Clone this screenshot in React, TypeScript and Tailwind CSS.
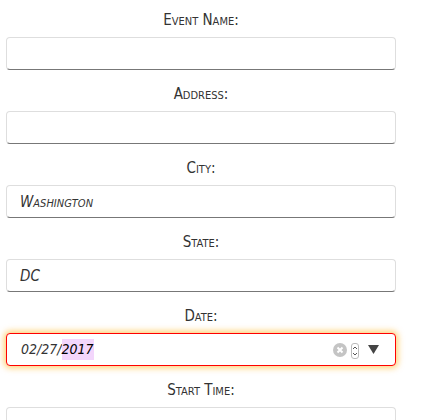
import React from "react";

const labelCls =
  "h-[28px] flex items-end justify-center text-[15px] leading-none text-[#333] [font-variant:small-caps]";
const inputCls =
  "h-[33px] w-full rounded-[4px] border border-[#dedede] border-b-[#777] bg-white flex items-center pl-[13px] pt-[2px] text-[#333] italic text-[15px] [font-variant:small-caps]";

function Field({ label, value, first }: { label: string; value?: string; first?: boolean }) {
  return (
    <div className={first ? "flex flex-col" : "flex flex-col mt-[4px]"}>
      <div className={labelCls}>{label}</div>
      <div className="h-[9px]" />
      <div className={inputCls}>{value}</div>
    </div>
  );
}

export default function App() {
  return (
    <div
      className="w-[435px] h-[420px] bg-white overflow-hidden"
      style={{ fontFamily: '"DejaVu Sans Condensed", "DejaVu Sans", sans-serif' }}
    >
      <div className="w-[390px] ml-[6px]">
        <Field label="Event Name:" first />
        <Field label="Address:" />
        <Field label="City:" value="Washington" />
        <Field label="State:" value="DC" />
        <div className="flex flex-col mt-[4px]">
          <div className={labelCls}>Date:</div>
          <div className="h-[9px]" />
          <div className="h-[33px] w-full rounded-[4px] border border-[#ff0000] bg-white flex items-center pl-[14px] pr-[16px] shadow-[0_0_6px_2px_rgba(255,170,0,0.55)]">
            <span className="italic text-[14px] text-[#333]">02/27/</span>
            <span className="italic text-[14px] text-black bg-[#f3d6fc]">2017</span>
            <div className="flex-1" />
            <svg width="14" height="14" viewBox="0 0 14 14" className="mr-[4px]">
              <circle cx="7" cy="7" r="7" fill="#c4c4c4" />
              <path d="M4.5 4.5 L9.5 9.5 M9.5 4.5 L4.5 9.5" stroke="#fff" strokeWidth="2" />
            </svg>
            <div className="w-[8px] h-[16px] mt-[3px] rounded-[3px] border border-[#bbb] flex flex-col items-center justify-center mr-[9px]">
              <svg width="6" height="12" viewBox="0 0 6 12">
                <path d="M1 4 L3 2 L5 4 M1 8 L3 10 L5 8" stroke="#555" strokeWidth="1" fill="none" />
              </svg>
            </div>
            <svg width="11" height="9" viewBox="0 0 11 9">
              <path d="M0 0 H11 L5.5 9 Z" fill="#444" />
            </svg>
          </div>
        </div>
        <Field label="Start Time:" />
      </div>
    </div>
  );
}
